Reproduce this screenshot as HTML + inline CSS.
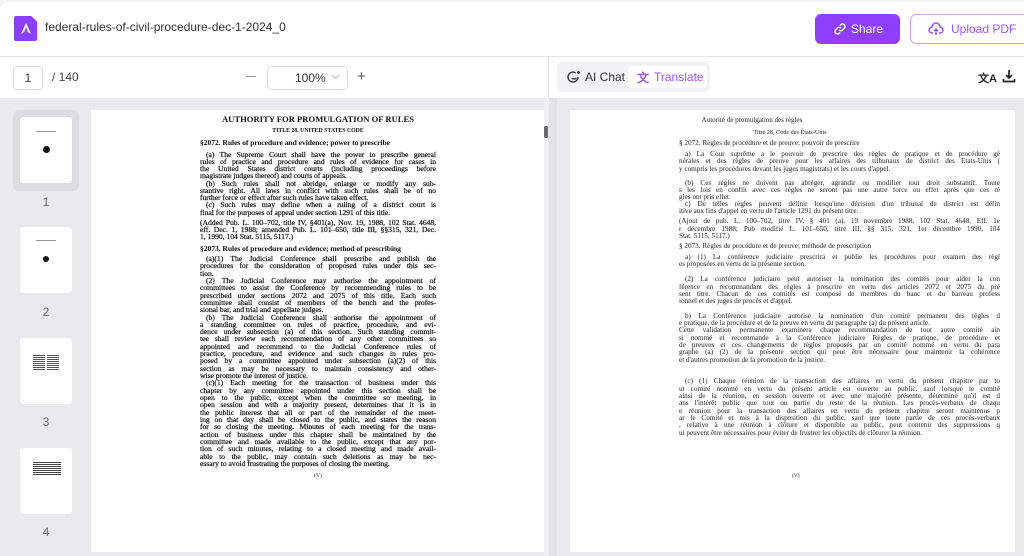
<!DOCTYPE html>
<html><head><meta charset="utf-8"><style>
*{margin:0;padding:0;box-sizing:border-box}
body{width:1024px;height:556px;overflow:hidden;background:#f3f4f6;font-family:"Liberation Sans",sans-serif;position:relative}
.a{position:absolute}
.L{position:absolute;left:200px;width:236px;font-family:"Liberation Serif",serif;font-size:7.7px;line-height:7.3px;height:8px;overflow:hidden;color:#111;text-align:justify;text-align-last:justify;letter-spacing:-0.05px;-webkit-text-stroke:0.2px #111}
.L.n{text-align-last:left}
.L.i{text-indent:6px}
.L.b{font-weight:bold;-webkit-text-stroke:0}
.R{position:absolute;left:679px;width:321px;font-family:"Liberation Serif",serif;font-size:7.2px;line-height:7.3px;height:8px;overflow:hidden;color:#222;text-align:justify;text-align-last:justify}
.R.n{text-align-last:left}
.R.i{text-indent:6px}
.th{position:absolute;left:20px;width:52px;height:66px;background:#fff;border-radius:3px}
.tn{position:absolute;left:0;width:92px;text-align:center;font-size:12px;color:#666}
</style></head><body>
<div class="a" style="left:0;top:2px;width:1024px;height:54px;background:#fff;border-radius:8px 0 0 0"></div>
<div class="a" style="left:14px;top:16px;width:23px;height:25px;background:#8a3ffc;border-radius:2px;clip-path:polygon(0 0,75% 0,100% 22%,100% 100%,0 100%)"></div>
<svg class="a" style="left:18px;top:21px" width="16" height="16" viewBox="0 0 16 16"><path d="M8 2 L3 13 L8 10 L13 13 Z" fill="#fff"/><path d="M8 6 L6 11 L8 10 L10 11Z" fill="#8a3ffc"/></svg>
<div class="a" style="left:45px;top:20px;font-size:12px;color:#333">federal-rules-of-civil-procedure-dec-1-2024_0</div>
<div class="a" style="left:815px;top:14px;width:85px;height:30px;background:#8f3eff;border-radius:6px;color:#fff;font-size:12px;line-height:30px;padding-left:36px">Share</div>
<svg class="a" style="left:833px;top:22px" width="14" height="14" viewBox="0 0 14 14" fill="none" stroke="#fff" stroke-width="1.5"><path d="M6 8a2.5 2.5 0 0 0 3.5 0l2-2a2.5 2.5 0 0 0-3.5-3.5l-1 1"/><path d="M8 6a2.5 2.5 0 0 0-3.5 0l-2 2a2.5 2.5 0 0 0 3.5 3.5l1-1"/></svg>
<div class="a" style="left:910px;top:14px;width:120px;height:30px;border:1px solid #c9a2ff;border-radius:6px;color:#9a55ff;font-size:12px;line-height:28px;padding-left:40px">Upload PDF</div>
<svg class="a" style="left:928px;top:21px" width="16" height="16" viewBox="0 0 16 16" fill="none" stroke="#9a55ff" stroke-width="1.5"><path d="M5 12H4a3 3 0 0 1 0-6 4 4 0 0 1 8 0 3 3 0 0 1 0 6h-1"/><path d="M8 14V8M6 10l2-2 2 2"/></svg>
<div class="a" style="left:0;top:56px;width:1024px;height:42px;background:#fff;border-top:1px solid #e6e6e6"></div>
<div class="a" style="left:13px;top:66px;width:30px;height:24px;border:1px solid #ddd;border-radius:4px;font-size:12px;text-align:center;line-height:22px;color:#333">1</div>
<div class="a" style="left:52px;top:70px;font-size:12px;color:#444">/ 140</div>
<div class="a" style="left:246px;top:76px;width:10px;height:1px;background:#999"></div>
<div class="a" style="left:267px;top:66px;width:81px;height:24px;border:1px solid #ddd;border-radius:5px;font-size:12px;line-height:22px;color:#333;padding-left:27px">100%</div>
<svg class="a" style="left:331px;top:74px" width="9" height="6"><path d="M1 1l3.5 3.5L8 1" fill="none" stroke="#bbb"/></svg>
<div class="a" style="left:357px;top:68px;font-size:15px;color:#555">+</div>
<div class="a" style="left:548px;top:57px;width:1px;height:41px;background:#e3e3e3"></div>
<div class="a" style="left:557px;top:62px;width:153px;height:30px;background:#f1f2f4;border-radius:5px"></div>
<div class="a" style="left:628px;top:66px;width:79px;height:22px;background:#fff;border-radius:4px"></div>
<svg class="a" style="left:567px;top:70px" width="14" height="14" viewBox="0 0 14 14" fill="none" stroke="#333" stroke-width="1.4"><path d="M11 7a5 5 0 1 1-2.2-4.1"/><path d="M4.5 8q2.5 2 5 0"/><path d="M11.5 1v3M10 2.5h3"/></svg>
<div class="a" style="left:585px;top:70px;font-size:12px;color:#333">AI Chat</div>
<div class="a" style="left:637px;top:69px;font-size:12px;font-weight:bold;color:#9a55ff">文</div>
<div class="a" style="left:654px;top:70px;font-size:12px;color:#9a55ff">Translate</div>
<div class="a" style="left:978px;top:70px;font-size:11px;font-weight:bold;color:#222">文A</div>
<svg class="a" style="left:1002px;top:69px" width="14" height="14" viewBox="0 0 14 14" fill="none" stroke="#222" stroke-width="1.7"><path d="M7 1v8M4 6l3 3 3-3M1.5 10v2.5h11V10"/></svg>
<div class="a" style="left:0;top:98px;width:1024px;height:458px;background:#e9eaec"></div>
<div class="a" style="left:13px;top:110px;width:66px;height:81px;background:#dcdde0;border-radius:6px"></div>
<div class="th" style="top:117px"></div><div class="tn" style="top:195px">1</div>
<div class="th" style="top:227px"></div><div class="tn" style="top:305px">2</div>
<div class="th" style="top:338px"></div><div class="tn" style="top:415px">3</div>
<div class="th" style="top:448px"></div><div class="tn" style="top:525px">4</div>
<div class="a" style="left:43px;top:146px;width:7px;height:7px;border-radius:50%;background:#111"></div>
<div class="a" style="left:43px;top:256px;width:6px;height:6px;border-radius:50%;background:#111"></div>
<div class="a" style="left:33px;top:355px;width:12px;height:16px;background:repeating-linear-gradient(#555 0 1px,#fff 1px 2px)"></div>
<div class="a" style="left:47px;top:355px;width:12px;height:16px;background:repeating-linear-gradient(#555 0 1px,#fff 1px 2px)"></div>
<div class="a" style="left:33px;top:462px;width:28px;height:14px;background:repeating-linear-gradient(#444 0 1px,#fff 1px 2px)"></div>
<div class="a" style="left:36px;top:131px;width:20px;height:1px;background:#999"></div>
<div class="a" style="left:36px;top:240px;width:20px;height:1px;background:#999"></div>
<div class="a" style="left:91px;top:110px;width:453px;height:442px;background:#fff"></div>
<div class="a" style="left:544px;top:98px;width:5px;height:458px;background:#f0f0f0"></div>
<div class="a" style="left:544px;top:126px;width:4px;height:12px;background:#666;border-radius:2px"></div>
<div class="a" style="left:549px;top:98px;width:8px;height:458px;background:#e2e3e5"></div>
<div class="a" style="left:570px;top:110px;width:445px;height:442px;background:#fff"></div>

<div class="a" style="left:200px;top:114px;width:236px;text-align:center;font-family:'Liberation Serif',serif;font-weight:bold;font-size:8.6px;color:#111">AUTHORITY FOR PROMULGATION OF RULES</div>
<div class="a" style="left:200px;top:128px;width:236px;text-align:center;font-family:'Liberation Serif',serif;font-weight:bold;font-size:5.8px;color:#111">TITLE 28, UNITED STATES CODE</div>
<div class="L n b" style="top:139px;font-size:7.6px">§2072. Rules of procedure and evidence; power to prescribe</div>
<div class="L i" style="top:151px">(a) The Supreme Court shall have the power to prescribe general</div>
<div class="L" style="top:158px">rules of practice and procedure and rules of evidence for cases in</div>
<div class="L" style="top:165px">the United States district courts (including proceedings before</div>
<div class="L n" style="top:172px">magistrate judges thereof) and courts of appeals.</div>
<div class="L i" style="top:180px">(b) Such rules shall not abridge, enlarge or modify any sub-</div>
<div class="L" style="top:187px">stantive right. All laws in conflict with such rules shall be of no</div>
<div class="L n" style="top:194px">further force or effect after such rules have taken effect.</div>
<div class="L i" style="top:201px">(c) Such rules may define when a ruling of a district court is</div>
<div class="L n" style="top:209px">final for the purposes of appeal under section 1291 of this title.</div>
<div class="L" style="top:219px">(Added Pub. L. 100–702, title IV, §401(a), Nov. 19, 1988, 102 Stat. 4648,</div>
<div class="L" style="top:226px">eff. Dec. 1, 1988; amended Pub. L. 101–650, title III, §§315, 321, Dec.</div>
<div class="L n" style="top:233px">1, 1990, 104 Stat. 5115, 5117.)</div>
<div class="L n b" style="top:245px;font-size:7.6px">§2073. Rules of procedure and evidence; method of prescribing</div>
<div class="L i" style="top:255px">(a)(1) The Judicial Conference shall prescribe and publish the</div>
<div class="L" style="top:262px">procedures for the consideration of proposed rules under this sec-</div>
<div class="L n" style="top:270px">tion.</div>
<div class="L i" style="top:277px">(2) The Judicial Conference may authorise the appointment of</div>
<div class="L" style="top:284px">committees to assist the Conference by recommending rules to be</div>
<div class="L" style="top:292px">prescribed under sections 2072 and 2075 of this title. Each such</div>
<div class="L" style="top:299px">committee shall consist of members of the bench and the profes-</div>
<div class="L n" style="top:306px">sional bar, and trial and appellate judges.</div>
<div class="L i" style="top:314px">(b) The Judicial Conference shall authorise the appointment of</div>
<div class="L" style="top:321px">a standing committee on rules of practice, procedure, and evi-</div>
<div class="L" style="top:328px">dence under subsection (a) of this section. Such standing commit-</div>
<div class="L" style="top:335px">tee shall review each recommendation of any other committees so</div>
<div class="L" style="top:343px">appointed and recommend to the Judicial Conference rules of</div>
<div class="L" style="top:350px">practice, procedure, and evidence and such changes in rules pro-</div>
<div class="L" style="top:357px">posed by a committee appointed under subsection (a)(2) of this</div>
<div class="L" style="top:365px">section as may be necessary to maintain consistency and other-</div>
<div class="L n" style="top:372px">wise promote the interest of justice.</div>
<div class="L i" style="top:379px">(c)(1) Each meeting for the transaction of business under this</div>
<div class="L" style="top:387px">chapter by any committee appointed under this section shall be</div>
<div class="L" style="top:394px">open to the public, except when the committee so meeting, in</div>
<div class="L" style="top:401px">open session and with a majority present, determines that it is in</div>
<div class="L" style="top:409px">the public interest that all or part of the remainder of the meet-</div>
<div class="L" style="top:416px">ing on that day shall be closed to the public, and states the reason</div>
<div class="L" style="top:423px">for so closing the meeting. Minutes of each meeting for the trans-</div>
<div class="L" style="top:431px">action of business under this chapter shall be maintained by the</div>
<div class="L" style="top:438px">committee and made available to the public, except that any por-</div>
<div class="L" style="top:445px">tion of such minutes, relating to a closed meeting and made avail-</div>
<div class="L" style="top:453px">able to the public, may contain such deletions as may be nec-</div>
<div class="L n" style="top:460px">essary to avoid frustrating the purposes of closing the meeting.</div>
<div class="a" style="left:200px;top:473px;width:236px;text-align:center;font-family:'Liberation Serif',serif;font-size:5.5px;color:#222">(V)</div>

<div class="a" style="left:679px;top:116px;width:146px;text-align:center;font-family:'Liberation Serif',serif;font-size:7px;color:#222">Autorité de promulgation des règles</div>
<div class="a" style="left:679px;top:129px;width:222px;text-align:center;font-family:'Liberation Serif',serif;font-size:6.2px;color:#222">Titre 28, Code des États-Unis</div>
<div class="R n" style="top:140px">§ 2072. Règles de procédure et de preuve; pouvoir de prescrire</div>
<div class="R i" style="top:151px">a) La Cour suprême a le pouvoir de prescrire des règles de pratique et de procédure gé</div>
<div class="R" style="top:158px">nérales et des règles de preuve pour les affaires des tribunaux de district des États-Unis (</div>
<div class="R n" style="top:166px">y compris les procédures devant les juges magistrats) et les cours d'appel.</div>
<div class="R i" style="top:180px">(b) Ces règles ne doivent pas abréger, agrandir ou modifier tout droit substantif.  Toute</div>
<div class="R" style="top:187px">s les lois en conflit avec ces règles ne seront pas une autre force ou effet après que ces rè</div>
<div class="R n" style="top:194px">gles ont pris effet.</div>
<div class="R i" style="top:201px">c) De telles règles peuvent définir lorsqu'une décision d'un tribunal de district est défin</div>
<div class="R n" style="top:208px">itive aux fins d'appel en vertu de l'article 1291 du présent titre.</div>
<div class="R" style="top:218px">(Ajout de pub. L. 100–702, titre IV, § 401 (a), 19 novembre 1988, 102 Stat. 4648, Eff. 1e</div>
<div class="R" style="top:226px">r décembre 1988; Pub modifié L. 101–650, titre III, §§ 315, 321, 1er décembre 1990, 104</div>
<div class="R n" style="top:233px">Stat. 5115, 5117.)</div>
<div class="R n" style="top:243px">§ 2073. Règles de procédure et de preuve; méthode de prescription</div>
<div class="R i" style="top:254px">a) (1) La conférence judiciaire prescrira et publie les procédures pour examen des règl</div>
<div class="R n" style="top:261px">es proposées en vertu de la présente section.</div>
<div class="R i" style="top:276px">(2) La conférence judiciaire peut autoriser la nomination des comités pour aider la con</div>
<div class="R" style="top:284px">férence en recommandant des règles à prescrire en vertu des articles 2072 et 2075 du pré</div>
<div class="R" style="top:291px">sent titre.  Chacun de ces comités est composé de membres du banc et du barreau profess</div>
<div class="R n" style="top:298px">ionnel et des juges de procès et d'appel.</div>
<div class="R i" style="top:313px">b) La Conférence judiciaire autorise la nomination d'un comité permanent des règles d</div>
<div class="R n" style="top:320px">e pratique, de la procédure et de la preuve en vertu du paragraphe (a) du présent article.</div>
<div class="R" style="top:327px">Cette validation permanente examinera chaque recommandation de tout autre comité ain</div>
<div class="R" style="top:335px">si nommé et recommande à la Conférence judiciaire Règles de pratique, de procédure et</div>
<div class="R" style="top:342px">de preuves et ces changements de règles proposés par un comité nommé en vertu du para</div>
<div class="R" style="top:349px">graphe (a) (2) de la présente section qui peut être nécessaire pour maintenir la cohérence</div>
<div class="R n" style="top:357px">et d'autres promotion de la promotion de la justice.</div>
<div class="R i" style="top:378px">(c) (1) Chaque réunion de la transaction des affaires en vertu du présent chapitre par to</div>
<div class="R" style="top:386px">ut comité nommé en vertu du présent article est ouverte au public, sauf lorsque le comité</div>
<div class="R" style="top:393px">ainsi de la réunion, en session ouverte et avec une majorité présente, détermine qu'il est d</div>
<div class="R" style="top:400px">ans l'intérêt public que tout ou partie du reste de la réunion. Les procès-verbaux de chaqu</div>
<div class="R" style="top:408px">e réunion pour la transaction des affaires en vertu du présent chapitre seront maintenus p</div>
<div class="R" style="top:415px">ar le Comité et mis à la disposition du public, sauf que toute partie de ces procès-verbaux</div>
<div class="R" style="top:422px">, relative à une réunion à clôture et disponible au public, peut contenir des suppressions q</div>
<div class="R n" style="top:430px">ui peuvent être nécessaires pour éviter de frustrer les objectifs de clôturer la réunion.</div>
<div class="a" style="left:792px;top:473px;font-family:'Liberation Serif',serif;font-size:5.5px;color:#222">(V)</div>
</body></html>
